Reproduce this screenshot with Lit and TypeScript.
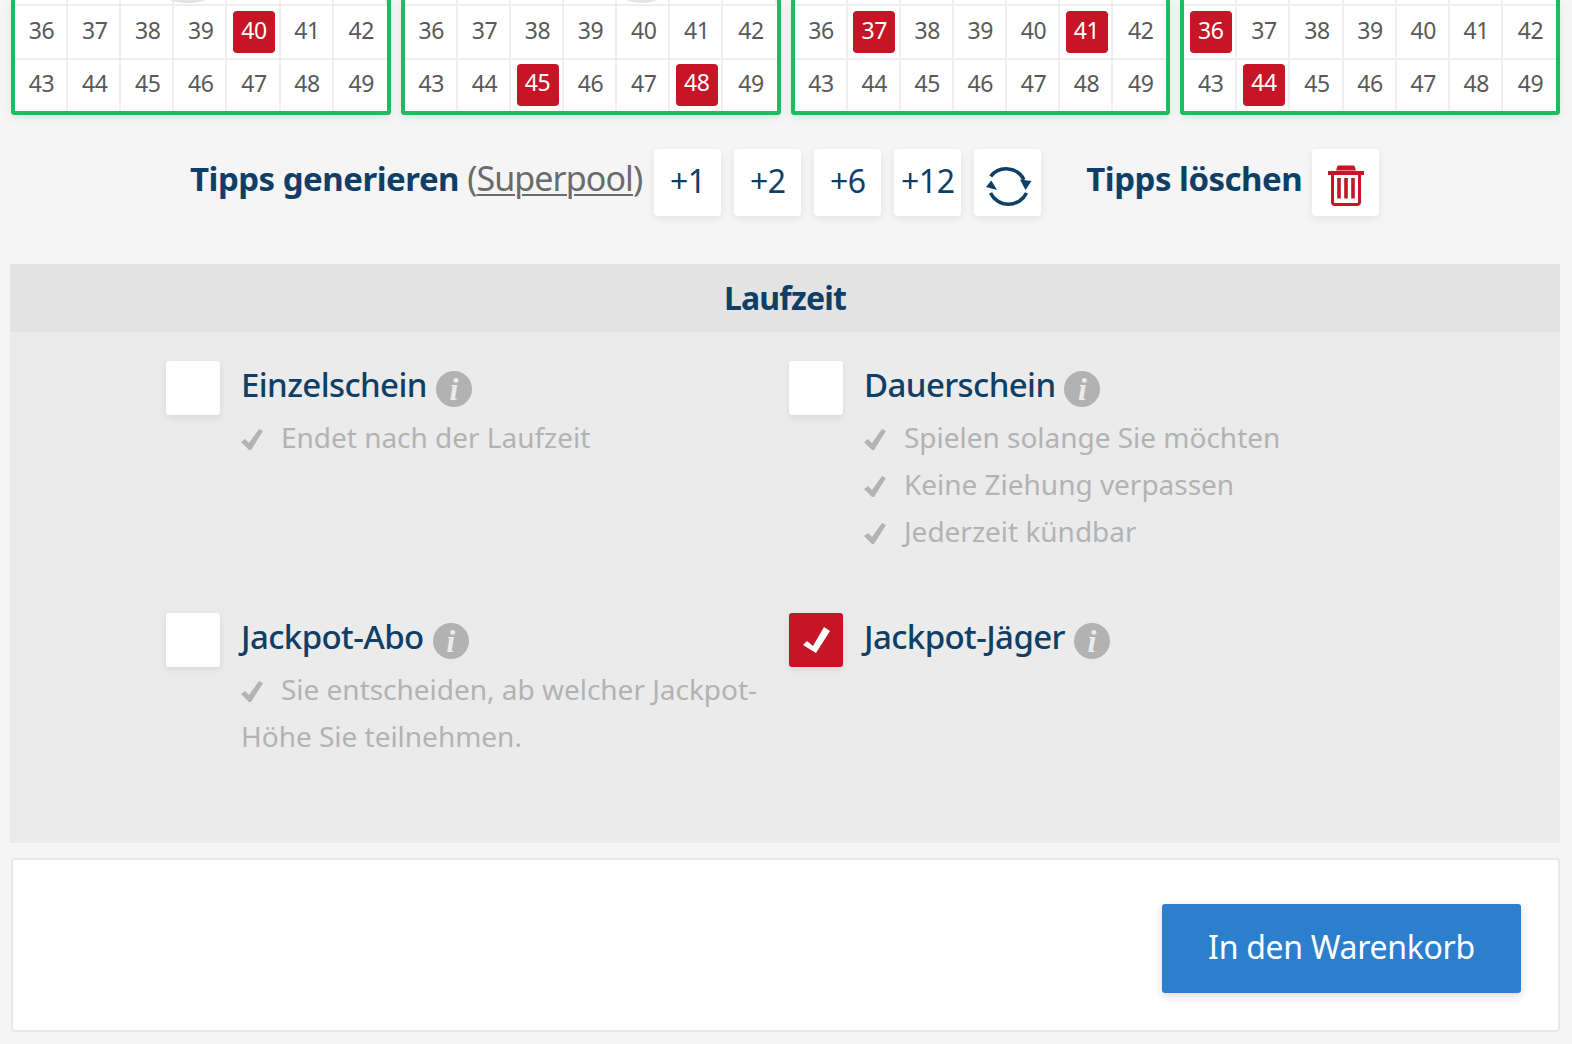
import { LitElement, html, css, svg } from "lit";
import { customElement } from "lit/decorators.js";

const cards = [
  { hits: [40], arc: { left: 150, width: 45 } },
  { hits: [45, 48], arc: { left: 217, width: 39 } },
  { hits: [37, 41], arc: null },
  { hits: [36, 44], arc: null },
];
const rows = [
  [36, 37, 38, 39, 40, 41, 42],
  [43, 44, 45, 46, 47, 48, 49],
];

const tick = svg`<svg class="tick" viewBox="0 0 22 21"><path d="M0 13l4-3 4 4L18 0l4 2-12 19H8z" fill="#b3b3b3"/></svg>`;
const info = html`<span class="info">i</span>`;

const options = [
  { title: "Einzelschein", checked: false, lines: ["Endet nach der Laufzeit"] },
  { title: "Dauerschein", checked: false, lines: ["Spielen solange Sie möchten", "Keine Ziehung verpassen", "Jederzeit kündbar"] },
  { title: "Jackpot-Abo", checked: false, lines: ["Sie entscheiden, ab welcher Jackpot-Höhe Sie teilnehmen."] },
  { title: "Jackpot-Jäger", checked: true, lines: [] as string[] },
];

@customElement("app-root")
export class AppRoot extends LitElement {
  static styles = css`
    :host {
      display: block;
      height: 1044px;
      overflow: hidden;
      background: #f5f5f5;
      font-family: "Noto Sans", "Open Sans", sans-serif;
    }
    .cards {
      display: grid;
      grid-template-columns: repeat(4, 1fr);
      column-gap: 10px;
      padding: 0 12px 0 11px;
    }
    .card {
      height: 115px;
      box-sizing: border-box;
      background: #fff;
      border: 4px solid #1fbb63;
      border-top: 0;
      border-radius: 0 0 4px 4px;
      box-shadow: 0 3px 8px rgba(0, 0, 0, 0.08);
      overflow: hidden;
    }
    .sliver {
      position: relative;
      height: 6px;
      border-bottom: 2px solid #eeeeee;
      box-sizing: border-box;
      display: grid;
      grid-template-columns: repeat(7, 1fr);
      overflow: hidden;
    }
    .sliver span { border-right: 2px solid #eeeeee; }
    .sliver span:last-child { border-right: 0; }
    .arc {
      position: absolute;
      top: -12px;
      height: 15px;
      border-radius: 50%;
      background: #e4e4e4;
    }
    .row {
      display: grid;
      grid-template-columns: repeat(7, 1fr);
      height: 52px;
    }
    .row + .row { border-top: 2px solid #eeeeee; height: 51px; }
    .cell {
      display: flex;
      align-items: center;
      justify-content: center;
      border-right: 2px solid #eeeeee;
      font-size: 23px;
      color: #595959;
      letter-spacing: -0.4px;
      padding: 0 0 4px 2px;
    }
    .row + .row .cell { padding-bottom: 6px; }
    .cell:last-child { border-right: 0; }
    .cell:has(.hit) { padding-bottom: 0; }
    .row + .row .cell:has(.hit) { padding-bottom: 2px; }
    .hit {
      width: 42px;
      height: 42px;
      box-sizing: border-box;
      padding-bottom: 5px;
      border-radius: 4px;
      background: #c51526;
      color: #fff;
      display: flex;
      align-items: center;
      justify-content: center;
    }
    .tools {
      display: flex;
      align-items: center;
      margin-top: 34px;
      padding-left: 190px;
      height: 67px;
    }
    .label {
      font-size: 33px;
      font-weight: 700;
      color: #0f3f66;
      letter-spacing: -0.5px;
      white-space: nowrap;
      padding-bottom: 9px;
    }
    .label .sp { font-weight: 400; font-size: 34px; color: #6b6b6b; letter-spacing: -0.9px; }
    .label u { text-underline-offset: 3px; text-decoration-thickness: 1.5px; }
    .btn {
      width: 67px;
      height: 67px;
      flex: none;
      box-sizing: border-box;
      background: #fff;
      border-radius: 4px;
      box-shadow: 0 3px 8px rgba(0, 0, 0, 0.08);
      display: flex;
      align-items: center;
      justify-content: center;
      font-size: 32px;
      color: #0f3f66;
      letter-spacing: -0.5px;
      padding-bottom: 5px;
    }
    .btn.icon { padding-bottom: 0; padding-top: 4px; }
    .btn.trash { padding-bottom: 0; padding-top: 5px; }
    .btns { display: flex; gap: 13px; margin-left: 12px; }
    .del { display: flex; align-items: center; gap: 10px; margin-left: 45px; }
    .panel { margin: 48px 12px 0 10px; background: #ebebeb; height: 579px; }
    .panel h2 {
      margin: 0;
      height: 68px;
      box-sizing: border-box;
      padding-bottom: 2px;
      background: #e3e3e3;
      display: flex;
      align-items: center;
      justify-content: center;
      font-size: 32px;
      font-weight: 700;
      letter-spacing: -0.8px;
      color: #0f3f66;
    }
    .opts {
      display: grid;
      grid-template-columns: 623px 623px;
      grid-template-rows: 252px auto;
      padding: 29px 0 0 156px;
    }
    .opt { display: flex; gap: 21px; align-items: flex-start; }
    .box {
      width: 54px;
      height: 54px;
      flex: none;
      background: #fff;
      border-radius: 3px;
      box-shadow: 0 3px 7px rgba(0, 0, 0, 0.08);
      display: flex;
      align-items: center;
      justify-content: center;
    }
    .box.on { background: #c51526; }
    .box svg { width: 27px; height: 26px; }
    .body { width: 520px; }
    .title {
      display: flex;
      align-items: center;
      gap: 9px;
      height: 52px;
      font-size: 33px;
      font-weight: 500;
      letter-spacing: -0.6px;
      color: #0f3f66;
    }
    .title .name { padding-bottom: 5px; }
    .info {
      width: 36px;
      height: 36px;
      border-radius: 50%;
      background: #b2b2b2;
      color: #ebebeb;
      font: italic 700 32px/36px "Liberation Serif", serif;
      text-align: center;
      letter-spacing: 0;
      margin-top: 3px;
    }
    .lines { margin-top: 1px; }
    .line {
      font-size: 28px;
      line-height: 47px;
      letter-spacing: -0.02px;
      color: #b3b3b3;
    }
    .tick { width: 22px; height: 21px; margin-right: 18px; vertical-align: -2px; }
    .foot {
      margin: 15px 12px 0 11px;
      height: 174px;
      box-sizing: border-box;
      background: #fff;
      border: 2px solid #e8e8e8;
      border-radius: 4px;
      display: flex;
      justify-content: flex-end;
      align-items: center;
      padding: 6px 37px 0 0;
    }
    .cart {
      width: 359px;
      height: 89px;
      box-sizing: border-box;
      padding-bottom: 3px;
      background: #2b7fcd;
      color: #fff;
      border-radius: 3px;
      box-shadow: 0 3px 8px rgba(0, 0, 0, 0.15);
      display: flex;
      align-items: center;
      justify-content: center;
      font-size: 32px;
      letter-spacing: -0.3px;
    }
  `;

  render() {
    return html`
      <div class="cards">
        ${cards.map(
          (c) => html`<div class="card">
            <div class="sliver">
              ${[0, 1, 2, 3, 4, 5, 6].map(() => html`<span></span>`)}
              ${c.arc
                ? html`<i class="arc" style="left:${c.arc.left}px;width:${c.arc.width}px"></i>`
                : ""}
            </div>
            ${rows.map(
              (r) => html`<div class="row">
                ${r.map(
                  (n) => html`<div class="cell">
                    ${c.hits.includes(n) ? html`<span class="hit">${n}</span>` : n}
                  </div>`
                )}
              </div>`
            )}
          </div>`
        )}
      </div>
      <div class="tools">
        <span class="label">Tipps generieren <span class="sp">(<u>Superpool</u>)</span></span>
        <div class="btns">
          ${["+1", "+2", "+6", "+12"].map((t) => html`<div class="btn">${t}</div>`)}
          <div class="btn icon">
            <svg width="48" height="44" viewBox="0 0 48 44" fill="none">
              <path d="M6.7 13.3A20 20 0 0 1 40 16.7" stroke="#0f3f66" stroke-width="3.5"/>
              <path d="M42.5 30A20 20 0 0 1 6.5 30" stroke="#0f3f66" stroke-width="3.5"/>
              <path d="M36 16.5l11.5 1.5-6 9z" fill="#0f3f66"/>
              <path d="M7.3 17.5l-5.3 6.5 11 3z" fill="#0f3f66"/>
            </svg>
          </div>
        </div>
        <div class="del">
          <span class="label">Tipps löschen</span>
          <div class="btn trash">
            <svg width="36" height="41" viewBox="0 0 36 41" fill="none">
              <path d="M8 5.5L9.5 1a1.5 1.5 0 0 1 1-.5h15a1.5 1.5 0 0 1 1 .5L28 5.5z" fill="#c51526"/>
              <path d="M0 6h36v4H0z" fill="#c51526"/>
              <path d="M4.5 9v28a2.5 2.5 0 0 0 2.5 2.5h22a2.5 2.5 0 0 0 2.5-2.5V9" stroke="#c51526" stroke-width="3"/>
              <path d="M11 13v20.5M18 13v20.5M25 13v20.5" stroke="#c51526" stroke-width="3.6"/>
            </svg>
          </div>
        </div>
      </div>
      <section class="panel">
        <h2>Laufzeit</h2>
        <div class="opts">
          ${options.map(
            (o) => html`<div class="opt">
              <div class="box ${o.checked ? "on" : ""}">
                ${o.checked
                  ? html`<svg viewBox="0 0 27 26"><path d="M0 18l4-4 6 5L21 0l6 4-14 22z" fill="#fff"/></svg>`
                  : ""}
              </div>
              <div class="body">
                <div class="title"><span class="name">${o.title}</span> ${info}</div>
                <div class="lines">
                  ${o.lines.map((l) => html`<div class="line">${tick}${l}</div>`)}
                </div>
              </div>
            </div>`
          )}
        </div>
      </section>
      <div class="foot"><div class="cart">In den Warenkorb</div></div>
    `;
  }
}
